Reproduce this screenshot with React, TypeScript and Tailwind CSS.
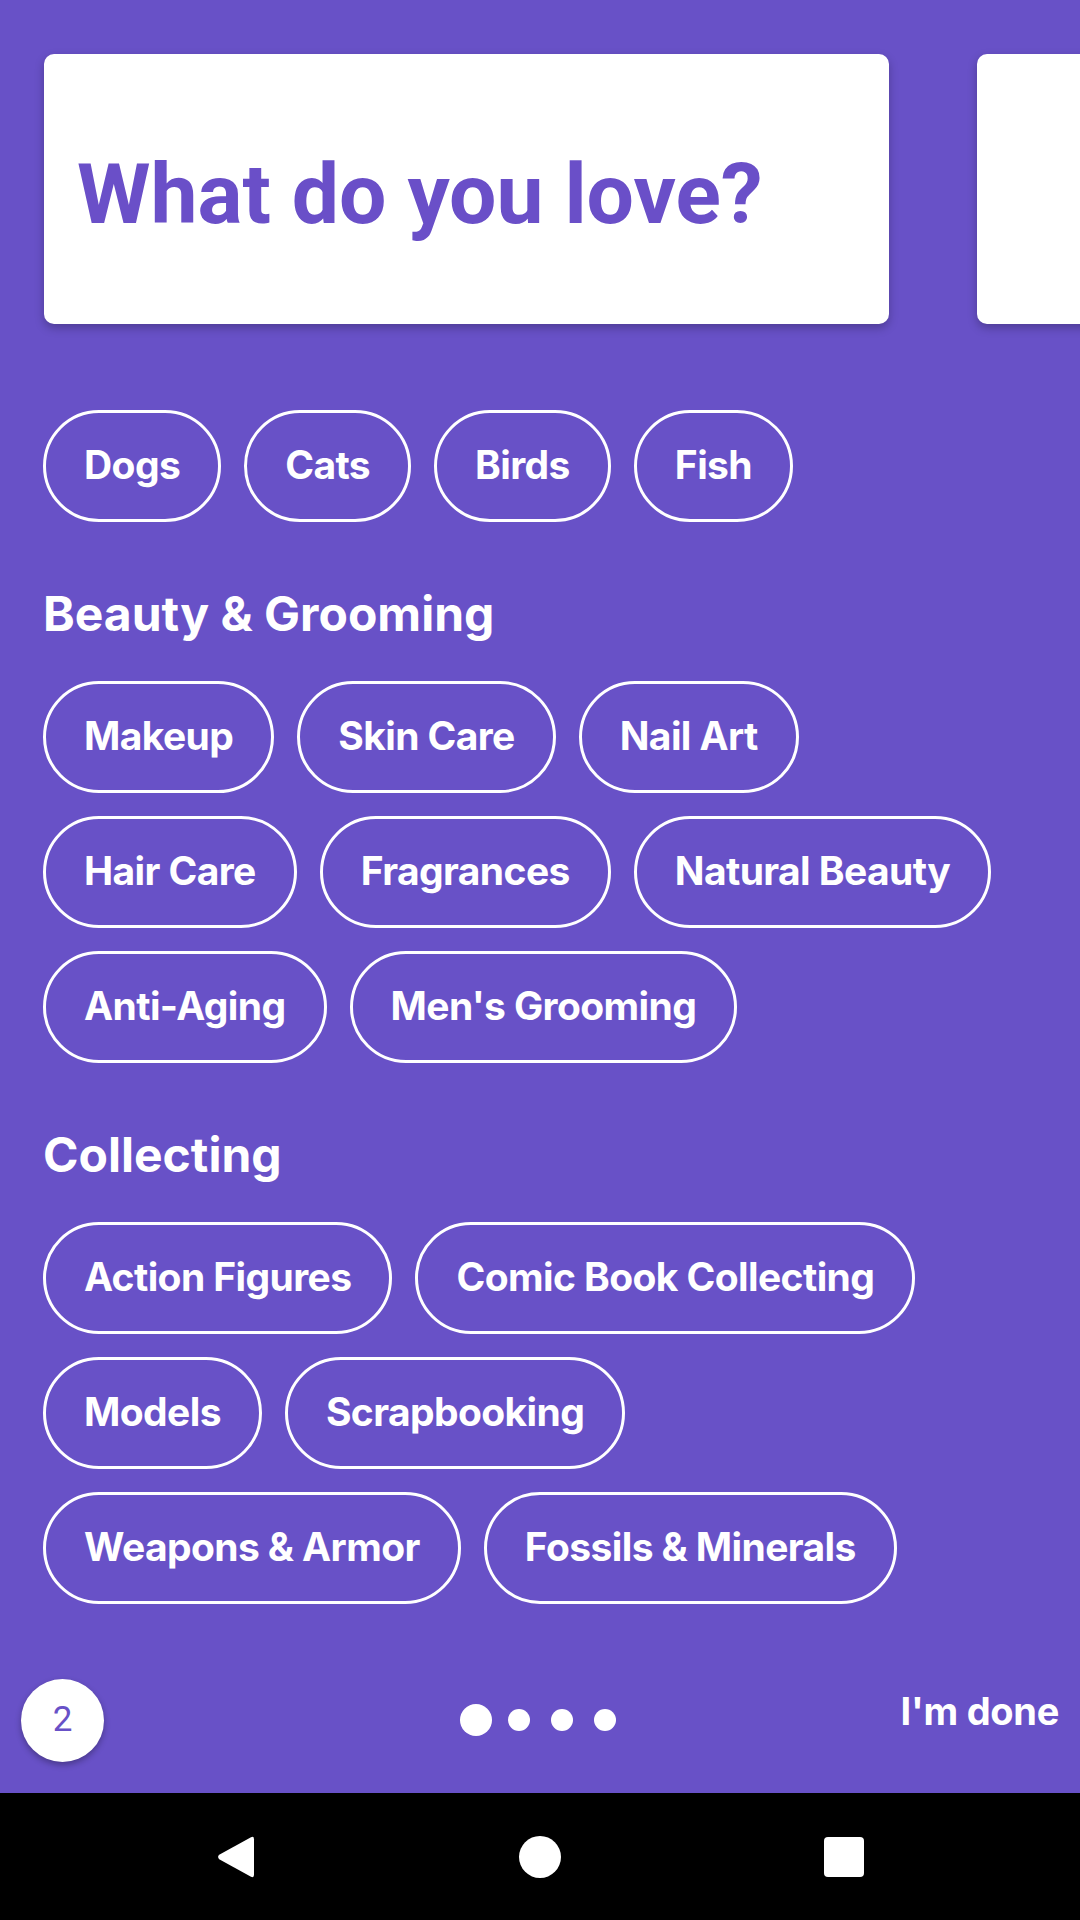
const PURPLE = "#6851c7";

const sections: { title?: string; items: string[] }[] = [
  { items: ["Dogs", "Cats", "Birds", "Fish"] },
  {
    title: "Beauty & Grooming",
    items: ["Makeup", "Skin Care", "Nail Art", "Hair Care", "Fragrances", "Natural Beauty", "Anti-Aging", "Men's Grooming"],
  },
  {
    title: "Collecting",
    items: ["Action Figures", "Comic Book Collecting", "Models", "Scrapbooking", "Weapons & Armor", "Fossils & Minerals"],
  },
];

function Chip({ label }: { label: string }) {
  return (
    <button className="h-[112px] px-[38px] pb-[4px] flex items-center rounded-full border-[3px] border-white text-white text-[39px] leading-none font-bold tracking-[-0.6px] font-['Inter',sans-serif]">
      {label}
    </button>
  );
}

export default function App() {
  return (
    <div className="w-[1080px] h-[1920px] bg-[#6851c7] flex flex-col overflow-hidden">
      {/* carousel */}
      <div className="flex gap-[88px] pl-[44px] pt-[54px] shrink-0">
        <div className="w-[845px] h-[270px] shrink-0 bg-white rounded-[10px] shadow-[0_4px_10px_rgba(0,0,0,0.25)] flex items-center pl-[33px] pt-[12px]">
          <h1 className="text-[84px] leading-none font-bold text-[#6a4fc8] font-['Roboto',sans-serif]">What do you love?</h1>
        </div>
        <div className="w-[845px] h-[270px] shrink-0 bg-white rounded-[10px] shadow-[0_4px_10px_rgba(0,0,0,0.25)]" />
      </div>

      {/* interests */}
      <div className="flex-1 px-[43px] pt-[86px]">
        {sections.map((s, i) => (
          <div key={i} className={i > 0 ? "mt-[68px]" : ""}>
            {s.title && (
              <h2 className="text-[48px] leading-none font-bold text-white mb-[43px] font-['Inter',sans-serif]">
                {s.title}
              </h2>
            )}
            <div className="flex flex-wrap gap-x-[23px] gap-y-[23px]">
              {s.items.map((it) => (
                <Chip key={it} label={it} />
              ))}
            </div>
          </div>
        ))}
      </div>

      {/* bottom controls */}
      <div className="h-[146px] shrink-0 grid grid-cols-[1fr_auto_1fr] items-center px-[21px]">
        <div className="flex">
          <div className="w-[83px] h-[83px] rounded-full bg-white shadow-[0_3px_6px_rgba(0,0,0,0.3)] flex items-center justify-center">
            <span className="text-[35px] font-['Roboto',sans-serif]" style={{ color: PURPLE }}>2</span>
          </div>
        </div>
        <div className="flex items-center">
          <span className="w-[43px] flex justify-center"><span className="w-[32px] h-[32px] rounded-full bg-white" /></span>
          <span className="w-[43px] flex justify-center"><span className="w-[22px] h-[22px] rounded-full bg-white" /></span>
          <span className="w-[43px] flex justify-center"><span className="w-[22px] h-[22px] rounded-full bg-white" /></span>
          <span className="w-[43px] flex justify-center"><span className="w-[22px] h-[22px] rounded-full bg-white" /></span>
        </div>
        <div className="flex justify-end pb-[18px]">
          <span className="text-[38px] leading-none font-bold text-white tracking-[-0.3px] font-['Inter',sans-serif]">I'm done</span>
        </div>
      </div>

      {/* android nav */}
      <div className="h-[127px] shrink-0 bg-black flex items-center justify-center gap-[184px]">
        <div className="w-[120px] flex justify-center">
          <svg width="38" height="42" viewBox="0 0 38 42">
            <path d="M34 1.2 Q37 -0.3 37 3.2 V38.8 Q37 42.3 34 40.8 L2.2 23.2 Q0 21 2.2 18.8 Z" fill="white" />
          </svg>
        </div>
        <div className="w-[120px] flex justify-center">
          <span className="w-[42px] h-[42px] rounded-full bg-white" />
        </div>
        <div className="w-[120px] flex justify-center">
          <span className="w-[40px] h-[40px] rounded-[4px] bg-white" />
        </div>
      </div>
    </div>
  );
}
